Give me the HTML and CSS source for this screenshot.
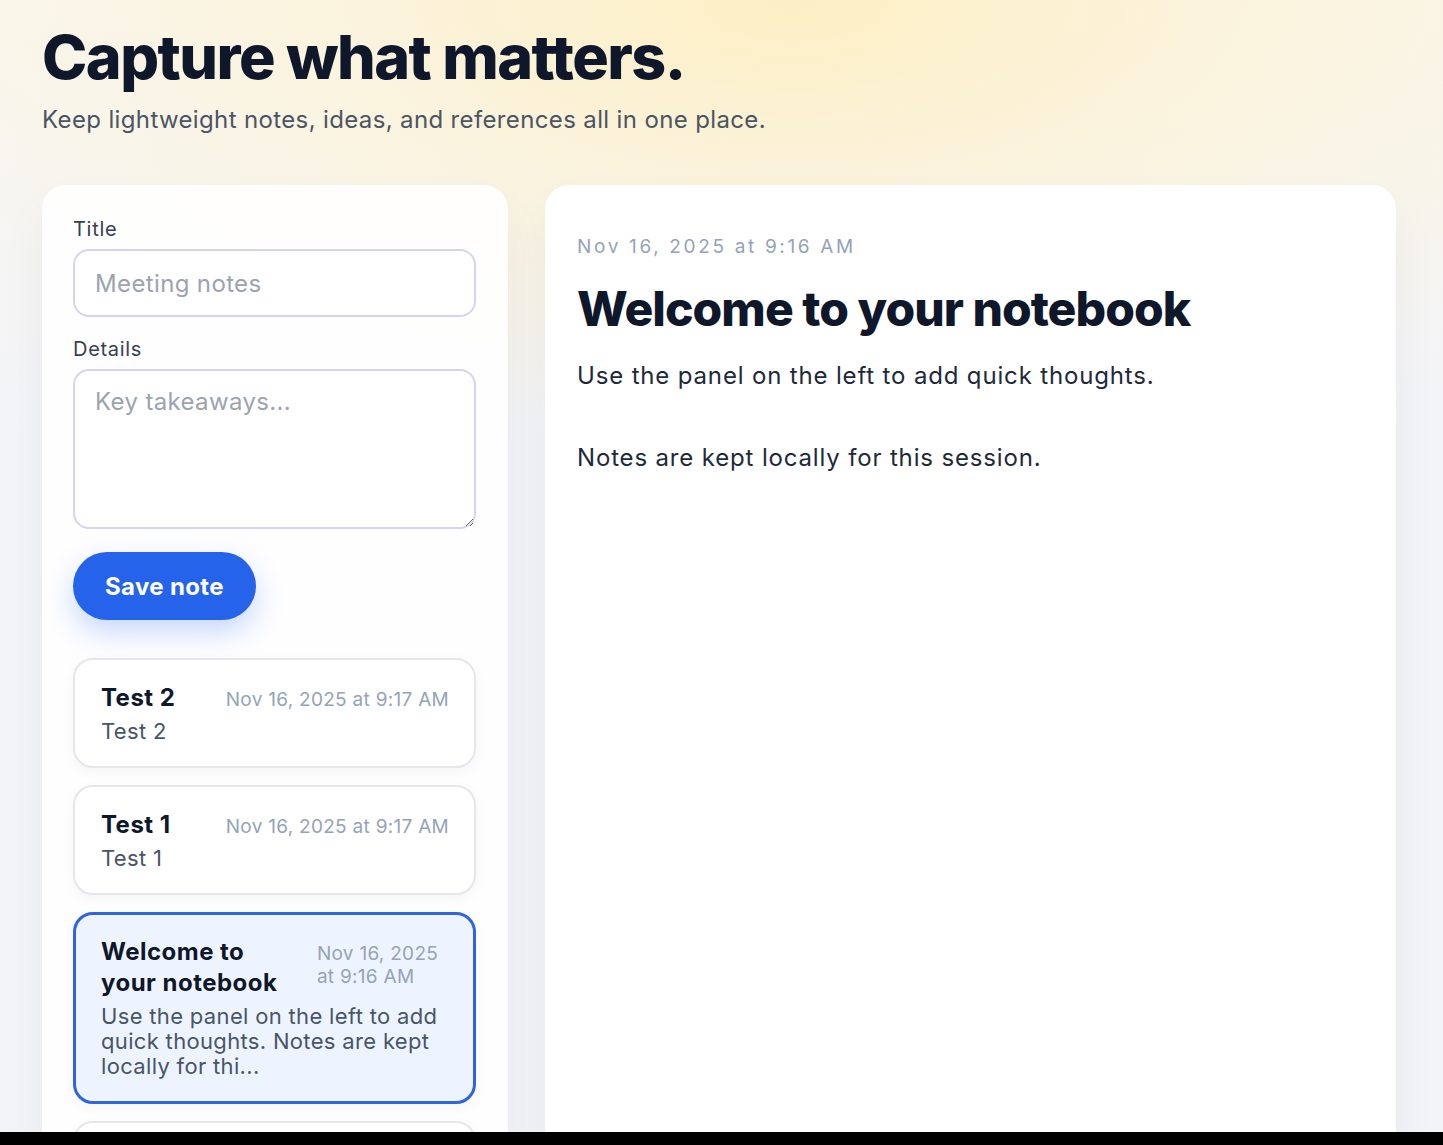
FILE: index.html
```html
<!DOCTYPE html>
<html lang="en">
<head>
<meta charset="utf-8">
<meta name="viewport" content="width=device-width, initial-scale=1">
<title>Notebook</title>
<link rel="stylesheet" href="styles.css">
</head>
<body>

  <div class="page">
    <header class="hero">
      <h1>Capture what matters.</h1>
      <p>Keep lightweight notes, ideas, and references all in one place.</p>
    </header>

    <main class="layout">
      <!-- left: form + list -->
      <aside class="panel">
        <form class="note-form">
          <label for="title">Title</label>
          <input id="title" type="text" placeholder="Meeting notes">

          <label for="details">Details</label>
          <textarea id="details" placeholder="Key takeaways..."></textarea>

          <button type="button" class="save-btn">Save note</button>
        </form>

        <ul class="notes">
          <li class="note">
            <div class="note-head">
              <span class="note-title">Test 2</span>
              <span class="note-date">Nov 16, 2025 at 9:17 AM</span>
            </div>
            <p class="note-body">Test 2</p>
          </li>
          <li class="note">
            <div class="note-head">
              <span class="note-title">Test 1</span>
              <span class="note-date">Nov 16, 2025 at 9:17 AM</span>
            </div>
            <p class="note-body">Test 1</p>
          </li>
          <li class="note active">
            <div class="note-head">
              <span class="note-title">Welcome to your notebook</span>
              <span class="note-date">Nov 16, 2025 at 9:16 AM</span>
            </div>
            <p class="note-body">Use the panel on the left to add quick thoughts. Notes are kept locally for thi...</p>
          </li>
          <li class="note">
            <div class="note-head">
              <span class="note-title">Ideas</span>
              <span class="note-date">Nov 15, 2025 at 4:02 PM</span>
            </div>
            <p class="note-body">Ideas</p>
          </li>
        </ul>
      </aside>

      <!-- right: selected note -->
      <article class="viewer">
        <div class="viewer-date">Nov 16, 2025 at 9:16 AM</div>
        <h2>Welcome to your notebook</h2>
        <p class="viewer-body">Use the panel on the left to add quick thoughts.

Notes are kept locally for this session.</p>
      </article>
    </main>
  </div>

  <div class="strip"></div>

</body>
</html>
```

FILE: styles.css
```css
* {
  box-sizing: border-box;
}

body {
  margin: 0;
  font-family: Inter, "Noto Sans", sans-serif;
  color: #0f172a;
  background:
    radial-gradient(ellipse 950px 440px at 55% 0%, #fdefc4 0%, rgba(252, 241, 210, 0.65) 45%, rgba(243, 244, 248, 0) 100%),
    linear-gradient(180deg, #f9f7ef 0px, #f3f4f8 440px);
  min-height: 100vh;
}

.page {
  padding: 21px 47px 0 42px;
}

/* Header */
.hero h1 {
  margin: 0;
  font-size: 61px;
  font-weight: 800;
  letter-spacing: -0.025em;
  line-height: 1.2;
}

.hero p {
  margin: 11px 0 0;
  font-size: 24px;
  letter-spacing: 0.015em;
  color: #4b5563;
}

/* Two columns */
.layout {
  display: grid;
  grid-template-columns: 466px 1fr;
  gap: 37px;
  margin-top: 51px;
  align-items: start;
}

.panel {
  background: rgba(255, 255, 255, 0.88);
  border-radius: 24px;
  padding: 32px 32px 40px 31px;
  box-shadow: 0 24px 48px rgba(15, 23, 42, 0.05);
}

.note-form {
  display: flex;
  flex-direction: column;
}

.note-form label {
  font-size: 20px;
  letter-spacing: 0.035em;
  line-height: 24px;
  color: #374151;
  margin-bottom: 8px;
}

.note-form input,
.note-form textarea {
  font-family: inherit;
  font-size: 24px;
  letter-spacing: 0.015em;
  color: #0f172a;
  border: 2px solid #d4d4f2;
  border-radius: 16px;
  background: #fff;
  padding: 16px 20px;
  outline: none;
}

.note-form input {
  height: 68px;
  margin-bottom: 20px;
}

.note-form textarea {
  height: 160px;
  resize: vertical;
}

.note-form ::placeholder {
  color: #9ca3af;
}

.save-btn {
  align-self: flex-start;
  margin-top: 23px;
  height: 68px;
  padding: 0 32px;
  border: none;
  border-radius: 34px;
  background: #2563eb;
  color: #fff;
  font-family: inherit;
  font-size: 24px;
  letter-spacing: 0.015em;
  font-weight: 700;
  box-shadow: 0 12px 28px rgba(37, 99, 235, 0.25);
  cursor: pointer;
}

/* Saved notes */
.notes {
  list-style: none;
  margin: 38px 0 0;
  padding: 0;
  display: flex;
  flex-direction: column;
  gap: 17px;
}

.note {
  background: #fff;
  border: 2px solid #e5e7eb;
  border-radius: 20px;
  padding: 22px 25px 22px 26px;
  box-shadow: 0 4px 14px rgba(15, 23, 42, 0.04);
}

.note.active {
  background: #eef4ff;
  border: 3px solid #2f64dc;
  padding: 21px 24px 22px 25px;
}

.note-head {
  display: flex;
  justify-content: space-between;
  align-items: baseline;
  gap: 24px;
}

.note-title {
  font-size: 24px;
  font-weight: 700;
  letter-spacing: 0.02em;
  line-height: 31px;
  color: #0f172a;
}

.note-date {
  font-size: 19px;
  letter-spacing: 0.015em;
  line-height: 23px;
  color: #94a3b8;
}

.note-body {
  margin: 6px 0 0;
  font-size: 22px;
  letter-spacing: 0.015em;
  line-height: 25px;
  color: #475569;
}

/* Right side */
.viewer {
  background: #fff;
  border-radius: 24px;
  padding: 48px 32px;
  min-height: 1000px;
  box-shadow: 0 24px 48px rgba(15, 23, 42, 0.05);
}

.viewer-date {
  font-size: 19px;
  letter-spacing: 0.14em;
  color: #94a3b8;
  line-height: 28px;
}

.viewer h2 {
  margin: 19px 0 0;
  font-size: 48px;
  font-weight: 800;
  letter-spacing: -0.02em;
  line-height: 1.2;
}

.viewer-body {
  margin: 17px 0 0;
  font-size: 24px;
  letter-spacing: 0.035em;
  line-height: 41px;
  color: #1e293b;
  white-space: pre-line;
}

.strip {
  position: fixed;
  left: 0;
  right: 0;
  bottom: 0;
  height: 13px;
  background: #000;
}
```
